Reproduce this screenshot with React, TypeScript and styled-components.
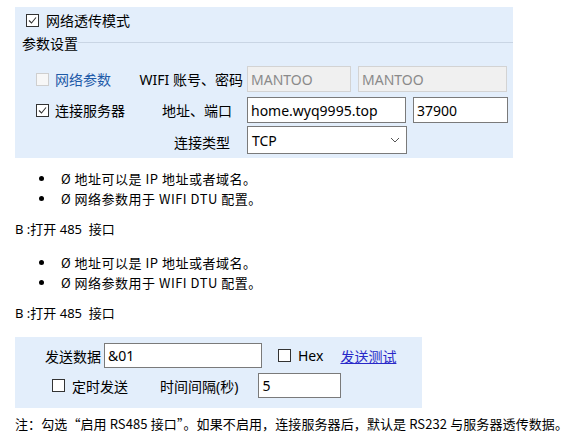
import React from 'react';
import styled, { createGlobalStyle } from 'styled-components';

const GlobalStyle = createGlobalStyle`
  html, body {
    margin: 0;
    padding: 0;
    background: #fff;
  }
  body {
    font-family: "Noto Sans", "Noto Sans CJK SC", sans-serif;
    color: #000;
  }
`;

const Page = styled.div`
  padding: 7px 0 0 15px;
  width: 588px;
  box-sizing: border-box;
`;

const Panel = styled.div<{ $w: number; $h: number }>`
  width: ${p => p.$w}px;
  height: ${p => p.$h}px;
  background: #e3eefb;
  box-sizing: border-box;
  font-size: 14px;
`;

const ModeRow = styled.label`
  display: flex;
  align-items: center;
  gap: 7px;
  height: 26px;
  padding-left: 11px;
`;

const Legend = styled.div`
  display: flex;
  align-items: center;
  height: 18px;
  margin-top: 2px;
  padding-left: 7px;
  font-size: 14px;
  line-height: 18px;
`;

const LegendLine = styled.div`
  flex: 1;
  height: 1px;
  background: #c9d5e4;
  margin-top: -4px;
`;

const FormGrid = styled.div`
  display: grid;
  grid-template-columns: 100px 103px auto;
  grid-auto-rows: 26px 26px 28px;
  column-gap: 4px;
  row-gap: 5px;
  margin: 13px 0 0 21px;
`;

const CheckCell = styled.label<{ $blue?: boolean }>`
  display: flex;
  align-items: center;
  gap: 6px;
  color: ${p => (p.$blue ? '#1e5aa8' : '#000')};
`;

const FieldLabel = styled.div<{ $pad?: number }>`
  display: flex;
  align-items: center;
  justify-content: flex-end;
  padding-right: ${p => p.$pad ?? 0}px;
  white-space: nowrap;
`;

const Fields = styled.div`
  display: flex;
  gap: 7px;
`;

const TextInput = styled.div<{ $w: number; $disabled?: boolean }>`
  width: ${p => p.$w}px;
  height: 100%;
  box-sizing: border-box;
  border: 1px solid ${p => (p.$disabled ? '#d3d3d3' : '#7a7a7a')};
  background: ${p => (p.$disabled ? '#f0f0f0' : '#fff')};
  color: ${p => (p.$disabled ? '#8a8a8a' : '#000')};
  display: flex;
  align-items: center;
  padding-left: 3px;
  font-size: 14px;
  white-space: nowrap;
  overflow: hidden;
`;

const SelectBox = styled.div`
  width: 160px;
  height: 28px;
  margin-top: -2px;
  box-sizing: border-box;
  border: 1px solid #7a7a7a;
  background: #fff;
  display: flex;
  align-items: center;
  justify-content: space-between;
  padding: 0 6px 0 4px;
`;

const Box = styled.span<{ $disabled?: boolean }>`
  width: 13px;
  height: 13px;
  box-sizing: border-box;
  border: 1px solid ${p => (p.$disabled ? '#cfcfcf' : '#333')};
  background: ${p => (p.$disabled ? '#f7f7f7' : '#fff')};
  display: inline-flex;
  align-items: center;
  justify-content: center;
  flex: none;
`;

const Check = ({ checked, disabled }: { checked?: boolean; disabled?: boolean }) => (
  <Box $disabled={disabled}>
    {checked && (
      <svg width="9" height="9" viewBox="0 0 9 9">
        <polyline points="1,4.5 3.5,7 8,1.5" fill="none" stroke="#333" strokeWidth="1.1" />
      </svg>
    )}
  </Box>
);

const TextBlock = styled.div`
  font-size: 13px;
  line-height: 20px;
`;

const List = styled.ul<{ $top: number }>`
  list-style: none;
  margin: ${p => p.$top}px 0 0 0;
  padding: 0;
`;

const Item = styled.li`
  display: flex;
  align-items: center;
  height: 20px;
  font-family: "Noto Sans CJK SC", sans-serif;
  font-size: 13px;
  padding-left: 24px;
  gap: 17px;
  letter-spacing: 0.5px;
`;

const Dot = styled.span`
  width: 5px;
  height: 5px;
  border-radius: 50%;
  background: #000;
  flex: none;
`;

const Caption = styled(TextBlock)<{ $top: number }>`
  margin-top: ${p => p.$top}px;
  height: 20px;
`;

const SendPanel = styled(Panel)`
  margin-top: 14px;
  padding: 6px 0 0 30px;
  display: flex;
  flex-direction: column;
  gap: 5px;
`;

const SendRow = styled.div<{ $indent?: number }>`
  display: flex;
  align-items: center;
  height: 25px;
  padding-left: ${p => p.$indent ?? 0}px;
`;

const Spacer = styled.span<{ $w: number }>`
  display: inline-block;
  width: ${p => p.$w}px;
  flex: none;
`;

const TestLink = styled.a`
  color: #2828c8;
  text-decoration: underline;
  cursor: pointer;
`;

const Note = styled.div`
  margin-top: 6px;
  font-family: "Noto Sans CJK SC", sans-serif;
  font-size: 13px;
  line-height: 20px;
  letter-spacing: 0.1px;
  white-space: nowrap;
`;

const tips = ['Ø 地址可以是 IP 地址或者域名。', 'Ø 网络参数用于 WIFI DTU 配置。'];

export default function App() {
  return (
    <Page>
      <GlobalStyle />
      <Panel $w={498} $h={151}>
        <ModeRow>
          <Check checked />
          网络透传模式
        </ModeRow>
        <Legend>
          <span>参数设置</span>
          <LegendLine />
        </Legend>
        <FormGrid>
          <CheckCell $blue>
            <Check disabled />
            网络参数
          </CheckCell>
          <FieldLabel>WIFI 账号、密码</FieldLabel>
          <Fields>
            <TextInput $w={104} $disabled>MANTOO</TextInput>
            <TextInput $w={149} $disabled>MANTOO</TextInput>
          </Fields>

          <CheckCell>
            <Check checked />
            连接服务器
          </CheckCell>
          <FieldLabel $pad={11}>地址、端口</FieldLabel>
          <Fields>
            <TextInput $w={159}>home.wyq9995.top</TextInput>
            <TextInput $w={95}>37900</TextInput>
          </Fields>

          <div />
          <FieldLabel $pad={13}>连接类型</FieldLabel>
          <SelectBox>
            <span>TCP</span>
            <svg width="10" height="6" viewBox="0 0 10 6">
              <polyline points="1,1 5,5 9,1" fill="none" stroke="#555" strokeWidth="1" />
            </svg>
          </SelectBox>
        </FormGrid>
      </Panel>

      <List $top={10}>
        {tips.map(t => (
          <Item key={t}>
            <Dot />
            {t}
          </Item>
        ))}
      </List>
      <Caption $top={11}>B :打开 485&nbsp; 接口</Caption>

      <List $top={13}>
        {tips.map(t => (
          <Item key={t}>
            <Dot />
            {t}
          </Item>
        ))}
      </List>
      <Caption $top={11}>B :打开 485&nbsp; 接口</Caption>

      <SendPanel $w={407} $h={71}>
        <SendRow>
          发送数据
          <Spacer $w={3} />
          <TextInput $w={158}>&amp;01</TextInput>
          <Spacer $w={16} />
          <Check />
          <Spacer $w={7} />
          Hex
          <Spacer $w={17} />
          <TestLink>发送测试</TestLink>
        </SendRow>
        <SendRow $indent={7}>
          <Check />
          <Spacer $w={7} />
          定时发送
          <Spacer $w={32} />
          时间间隔(秒)
          <Spacer $w={20} />
          <TextInput $w={83}>5</TextInput>
        </SendRow>
      </SendPanel>

      <Note>注：勾选“启用 RS485 接口”。如果不启用，连接服务器后，默认是 RS232 与服务器透传数据。</Note>
    </Page>
  );
}
